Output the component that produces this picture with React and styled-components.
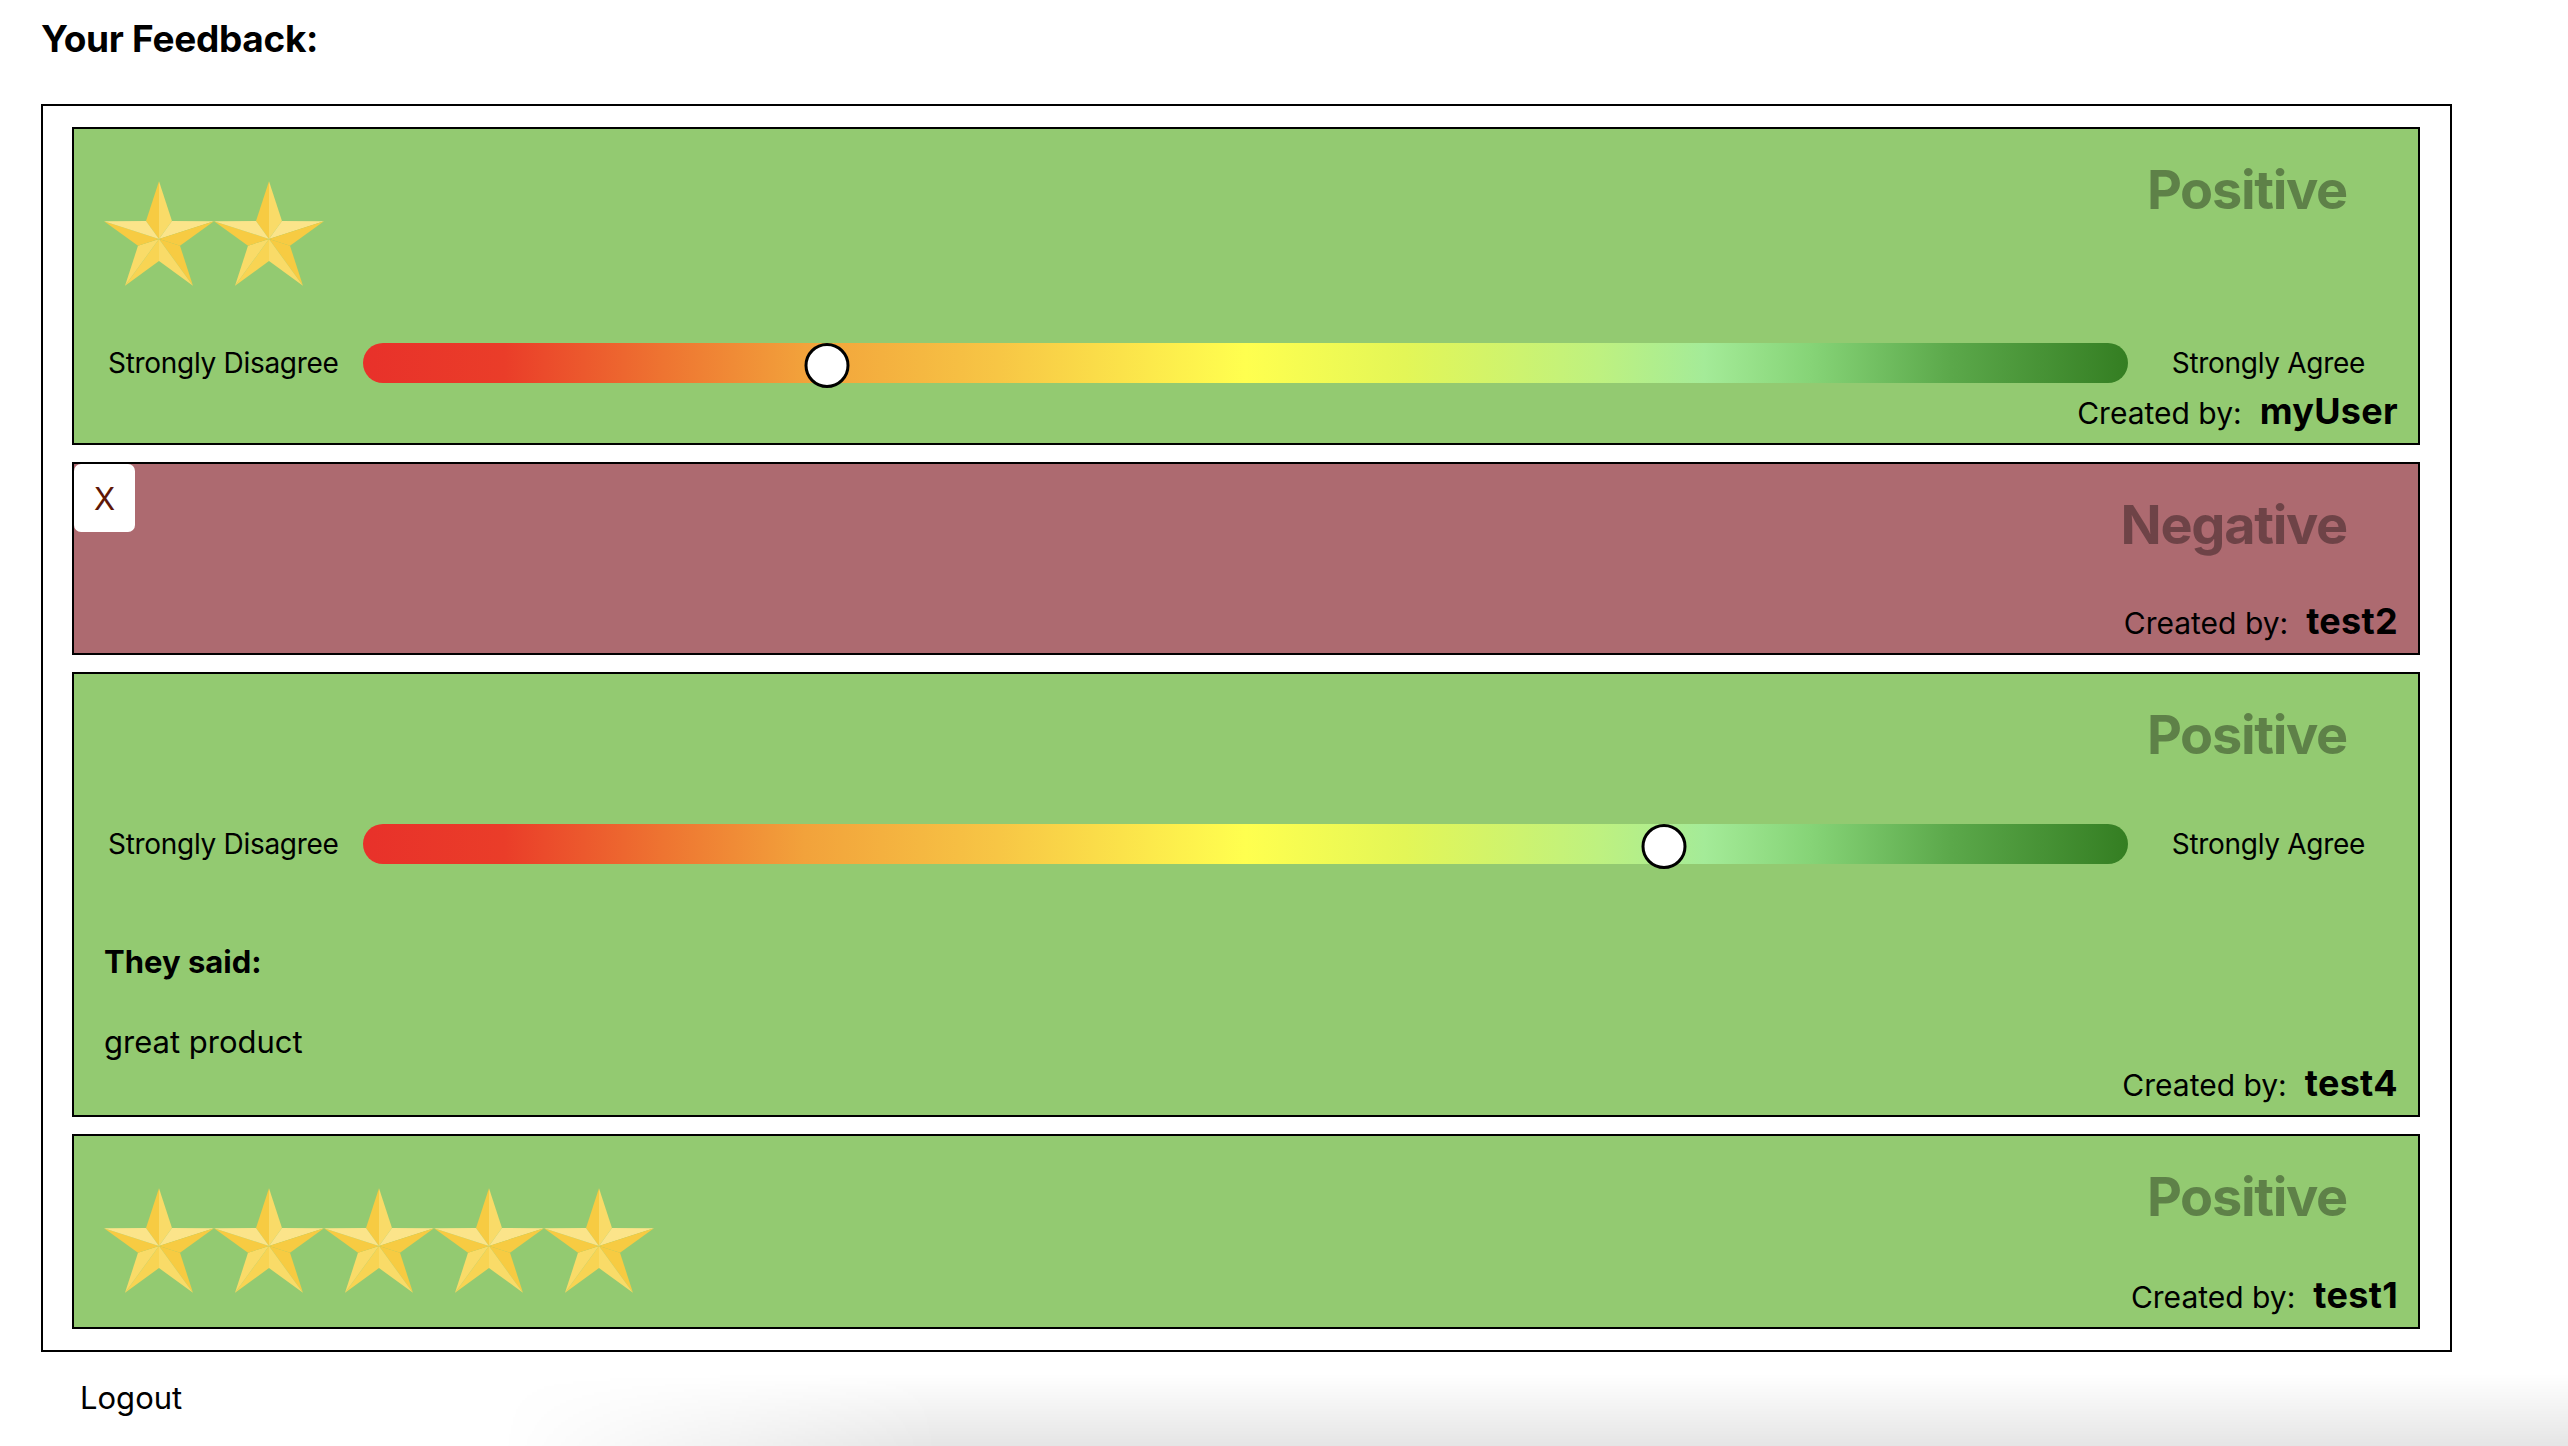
import React from "react";
import styled, { createGlobalStyle } from "styled-components";

const GlobalStyle = createGlobalStyle`
  html, body {
    margin: 0;
    background: #fff;
  }
  body {
    font-family: Inter, "Noto Sans", sans-serif;
    color: #000;
    min-height: 100vh;
  }
  body::after {
    content: "";
    position: fixed;
    left: 500px;
    right: 0;
    bottom: 0;
    height: 72px;
    pointer-events: none;
    background: linear-gradient(to bottom, rgba(0, 0, 0, 0), rgba(0, 0, 0, 0.1));
    -webkit-mask-image: linear-gradient(to right, transparent, #000 440px);
    mask-image: linear-gradient(to right, transparent, #000 440px);
  }
`;

const Page = styled.main`
  padding: 16px 0 40px 41px;
`;

const Title = styled.h3`
  margin: 0 0 43px;
  font-size: 37px;
  font-weight: 700;
  letter-spacing: -0.3px;
  line-height: normal;
`;

const FeedbackList = styled.section`
  width: 2411px;
  box-sizing: border-box;
  border: 2px solid #000;
  padding: 21px 30px 21px 29px;
  display: flex;
  flex-direction: column;
  gap: 17px;
`;

const Card = styled.article`
  position: relative;
  display: grid;
  grid-template-columns: 1fr auto;
  grid-template-areas: ${(props) => props.$areas};
  border: 2px solid #000;
  padding: 28px 20px 10px 30px;
  background: ${(props) => (props.$negative ? "#ad6a70" : "#93ca71")};
`;

const RemoveButton = styled.button`
  position: absolute;
  top: 0;
  left: 0;
  width: 61px;
  height: 68px;
  padding: 0;
  border: none;
  border-radius: 7px;
  background: #fff;
  color: #5e1707;
  font-family: Inter, "Noto Sans", sans-serif;
  font-size: 31px;
  cursor: pointer;
`;

const Sentiment = styled.div`
  grid-area: label;
  justify-self: end;
  align-self: start;
  margin-right: 51px;
  font-size: 54px;
  font-weight: 700;
  letter-spacing: -1.3px;
  line-height: normal;
  color: rgba(0, 0, 0, 0.36);
`;

const Stars = styled.div`
  grid-area: stars;
  align-self: start;
  display: flex;
  margin-top: 24px;
`;

const StarIcon = styled.svg`
  display: block;
  width: 110px;
  height: 105px;
  flex-shrink: 0;
`;

const SliderRow = styled.div`
  grid-area: slider;
  display: flex;
  align-items: center;
  height: 46px;
  margin-top: 54px;
  padding: 0 33px 0 4px;
`;

const EndLabel = styled.span`
  font-size: 28px;
  letter-spacing: -0.3px;
  line-height: normal;
  white-space: nowrap;
  margin: ${(props) => (props.$end ? "0 0 0 44px" : "0 24px 0 0")};
`;

const Track = styled.div`
  position: relative;
  flex: 1;
  height: 40px;
  border-radius: 20px;
  background: linear-gradient(
    to right,
    #e8312a 0%,
    #ea3d29 8%,
    #ee7431 17%,
    #f2a23b 25%,
    #f7c645 36%,
    #ffff4f 50%,
    #e3f657 59%,
    #bef180 70%,
    #a4eb98 76%,
    #86d477 82%,
    #5ba84a 90%,
    #347e22 100%
  );
`;

const Thumb = styled.span`
  position: absolute;
  top: 50%;
  width: 45px;
  height: 45px;
  box-sizing: border-box;
  border: 3px solid #000;
  border-radius: 50%;
  background: #fff;
  transform: translate(-50%, -50%) translateY(2.5px);
`;

const Comment = styled.div`
  grid-area: comment;
  margin-top: 76px;
`;

const CommentHeading = styled.h4`
  margin: 0;
  font-size: 31px;
  font-weight: 700;
  line-height: normal;
`;

const CommentText = styled.p`
  margin: 43px 0 0;
  font-size: 31px;
  line-height: normal;
`;

const CreatedBy = styled.div`
  grid-area: created;
  justify-self: end;
  align-self: start;
  margin-top: ${(props) => props.$gap}px;
  font-size: 30px;
  line-height: normal;
  white-space: nowrap;
`;

const Username = styled.strong`
  margin-left: 18px;
  font-size: 36px;
  font-weight: 700;
  letter-spacing: 0.3px;
`;

const LogoutButton = styled.button`
  display: block;
  margin: 27px 0 0 39px;
  padding: 0;
  border: none;
  background: none;
  font-family: Inter, "Noto Sans", sans-serif;
  font-size: 31px;
  line-height: normal;
  color: #000;
  cursor: pointer;
`;

const DARK = "#f7cb42";
const MID = "#f8d453";
const SOFT = "#f9db68";
const LIGHT = "#fbe48a";

// faceted 5 point star, centred on the origin
function Star() {
  const facets = [
    ["-13.03,-17.93 0,-58", DARK],
    ["0,-58 13.03,-17.93", SOFT],
    ["13.03,-17.93 55.16,-17.92", LIGHT],
    ["55.16,-17.92 21.08,6.85", DARK],
    ["21.08,6.85 34.09,46.92", DARK],
    ["34.09,46.92 0,22.16", SOFT],
    ["0,22.16 -34.09,46.92", MID],
    ["-34.09,46.92 -21.08,6.85", SOFT],
    ["-21.08,6.85 -55.16,-17.92", DARK],
    ["-55.16,-17.92 -13.03,-17.93", LIGHT],
  ];
  return (
    <StarIcon viewBox="-55.2 -58 110.4 105" aria-hidden="true">
      {facets.map(([pts, fill]) => (
        <polygon key={pts} points={`0,0 ${pts}`} fill={fill} />
      ))}
    </StarIcon>
  );
}

const feedback = [
  { id: 1, sentiment: "Positive", stars: 2, agreement: 2, author: "myUser" },
  { id: 2, sentiment: "Negative", removable: true, author: "test2" },
  {
    id: 3,
    sentiment: "Positive",
    agreement: 4,
    comment: "great product",
    author: "test4",
  },
  { id: 4, sentiment: "Positive", stars: 5, author: "test1" },
];

function layoutFor(item) {
  const rows = [item.stars ? '"stars label"' : '". label"'];
  if (item.agreement) rows.push('"slider slider"');
  if (item.comment) rows.push('"comment comment"');
  const onlyHeader = !item.agreement && !item.comment;
  rows.push(onlyHeader && item.stars ? '"stars created"' : '"created created"');
  let gap = item.stars ? 44 : 42;
  if (item.comment) gap = 1;
  else if (item.agreement) gap = 3;
  return { areas: rows.join(" "), gap };
}

function AgreementSlider({ value }) {
  const fraction = (value - 1) / 4;
  return (
    <SliderRow>
      <EndLabel>Strongly Disagree</EndLabel>
      <Track>
        <Thumb style={{ left: `calc(45.5px + ${fraction} * (100% - 91px))` }} />
      </Track>
      <EndLabel $end>Strongly Agree</EndLabel>
    </SliderRow>
  );
}

function FeedbackCard({ item }) {
  const { areas, gap } = layoutFor(item);
  return (
    <Card $areas={areas} $negative={item.sentiment === "Negative"}>
      {item.removable && <RemoveButton>X</RemoveButton>}
      {item.stars && (
        <Stars>
          {Array.from({ length: item.stars }, (_, i) => (
            <Star key={i} />
          ))}
        </Stars>
      )}
      <Sentiment>{item.sentiment}</Sentiment>
      {item.agreement && <AgreementSlider value={item.agreement} />}
      {item.comment && (
        <Comment>
          <CommentHeading>They said:</CommentHeading>
          <CommentText>{item.comment}</CommentText>
        </Comment>
      )}
      <CreatedBy $gap={gap}>
        Created by:<Username>{item.author}</Username>
      </CreatedBy>
    </Card>
  );
}

export default function App() {
  return (
    <Page>
      <GlobalStyle />
      <Title>Your Feedback:</Title>
      <FeedbackList>
        {feedback.map((item) => (
          <FeedbackCard key={item.id} item={item} />
        ))}
      </FeedbackList>
      <LogoutButton>Logout</LogoutButton>
    </Page>
  );
}
